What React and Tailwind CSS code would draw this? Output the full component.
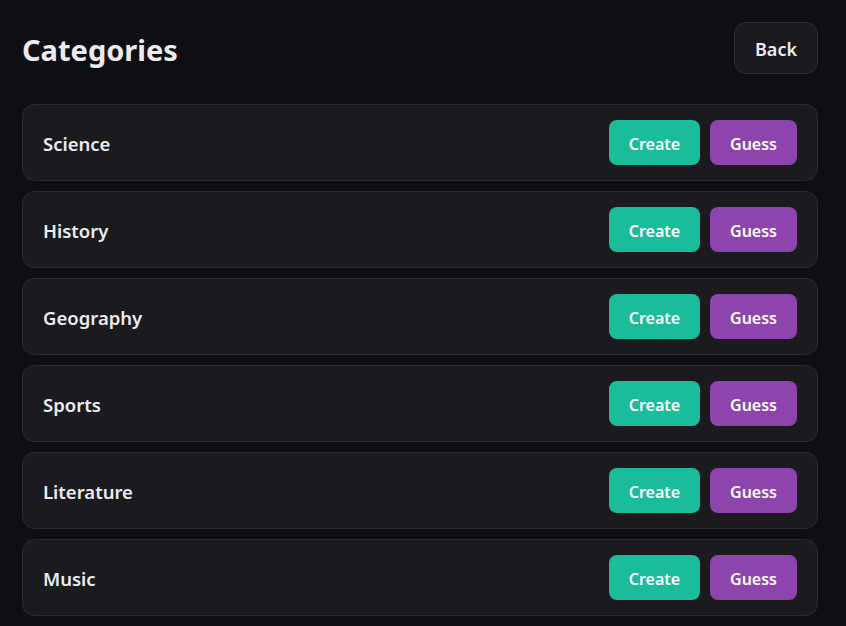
const categories = ["Science", "History", "Geography", "Sports", "Literature", "Music"];

export default function App() {
	return (
		<div
			className="min-h-screen w-full bg-[#0f0f13] text-[#ececf0] pl-[22px] pr-[28px] pt-[22px]"
			style={{ fontFamily: '"Noto Sans", "Open Sans", sans-serif' }}
		>
			<div className="flex items-center justify-between">
				<h1 className="pt-[3px] text-[29px] font-bold leading-none">Categories</h1>
				<button className="h-[52px] w-[84px] rounded-xl border border-[#2b2b31] bg-[#1a1a1f] pt-[2px] text-[18px] font-semibold">
					Back
				</button>
			</div>
			<div className="mt-[30px] flex flex-col gap-[10px]">
				{categories.map((name) => (
					<div
						key={name}
						className="flex items-center justify-between rounded-xl border border-[#2b2b31] bg-[#1a1a1f] px-5 py-[15px]"
					>
						<span className="pt-[3px] text-[18.5px] font-semibold">{name}</span>
						<div className="flex gap-[10px]">
							<button className="h-[45px] w-[91px] rounded-lg bg-[#1abc9c] pt-[2px] text-[16px] font-semibold text-white">
								Create
							</button>
							<button className="h-[45px] w-[87px] rounded-lg bg-[#8e44ad] pt-[2px] text-[16px] font-semibold text-white">
								Guess
							</button>
						</div>
					</div>
				))}
			</div>
		</div>
	);
}
